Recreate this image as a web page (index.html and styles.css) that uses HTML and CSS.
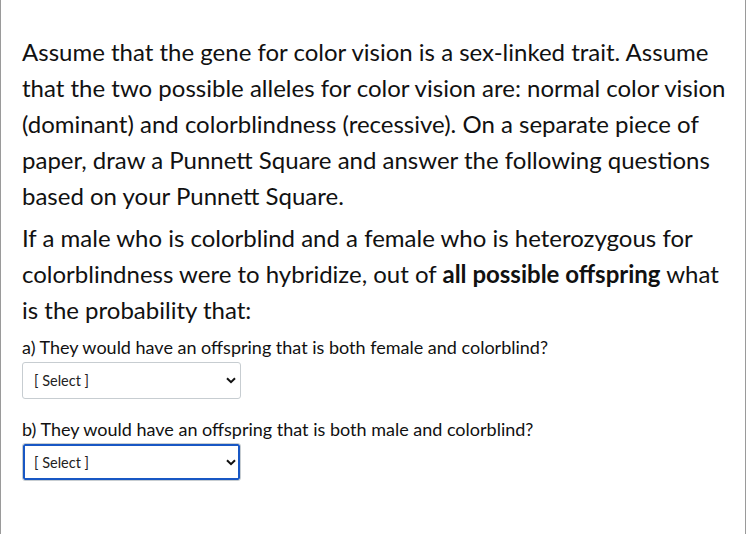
FILE: index.html
```html
<!DOCTYPE html>
<html lang="en">
<head>
<meta charset="utf-8">
<title>Question</title>
<link rel="stylesheet" href="styles.css">
</head>
<body>
<div class="frame">
  <div class="question">
    <p class="para">Assume that the gene for color vision is a sex-linked trait. Assume that the two possible alleles for color vision are: normal color vision (dominant) and colorblindness (recessive). On a separate piece of paper, draw a Punnett Square and answer the following questions based on your Punnett Square.</p>
    <p class="para">If a male who is colorblind and a female who is heterozygous for colorblindness were to hybridize, out of <strong>all possible offspring</strong> what is the probability that:</p>
    <p class="sub">a) They would have an offspring that is both female and colorblind?</p>
    <div class="select">
      <span class="select-text">[ Select ]</span>
      <svg class="chev" width="10" height="7" viewBox="0 0 10 7"><path d="M1 1.2 L5 5.2 L9 1.2" fill="none" stroke="#111" stroke-width="2"/></svg>
    </div>
    <p class="sub sub-b">b) They would have an offspring that is both male and colorblind?</p>
    <div class="select focused">
      <span class="select-text">[ Select ]</span>
      <svg class="chev" width="10" height="7" viewBox="0 0 10 7"><path d="M1 1.2 L5 5.2 L9 1.2" fill="none" stroke="#111" stroke-width="2"/></svg>
    </div>
  </div>
</div>
</body>
</html>
```
FILE: styles.css
```css
html, body {
  margin: 0;
  padding: 0;
  background: #ffffff;
}
body {
  font-family: Lato, "Noto Sans", sans-serif;
  color: #111111;
}
.frame {
  width: 744px;
  height: 534px;
  border-left: 1px solid #9a9a9a;
  border-right: 1px solid #9a9a9a;
  box-sizing: content-box;
}
.question {
  padding: 34px 18px 0 21px;
}
.para {
  margin: 0 0 6px 0;
  font-size: 24px;
  line-height: 36px;
}
.para strong {
  font-weight: 700;
}
.sub {
  margin: 0;
  font-size: 18px;
  line-height: 26px;
}
.sub-b {
  margin-top: 17px;
}
.select {
  box-sizing: border-box;
  width: 219px;
  height: 37px;
  border: 1px solid #c7cdd1;
  border-radius: 3px;
  display: flex;
  align-items: center;
  justify-content: space-between;
  padding: 0 4px 0 11px;
  margin-top: 2px;
}
.select.focused {
  height: 38px;
  margin-top: 1px;
  box-shadow: inset 0 0 0 2px #1857c4;
  border-radius: 3px;
}
.select-text {
  font-size: 14.5px;
  color: #222;
}
.chev {
  display: block;
}
```
